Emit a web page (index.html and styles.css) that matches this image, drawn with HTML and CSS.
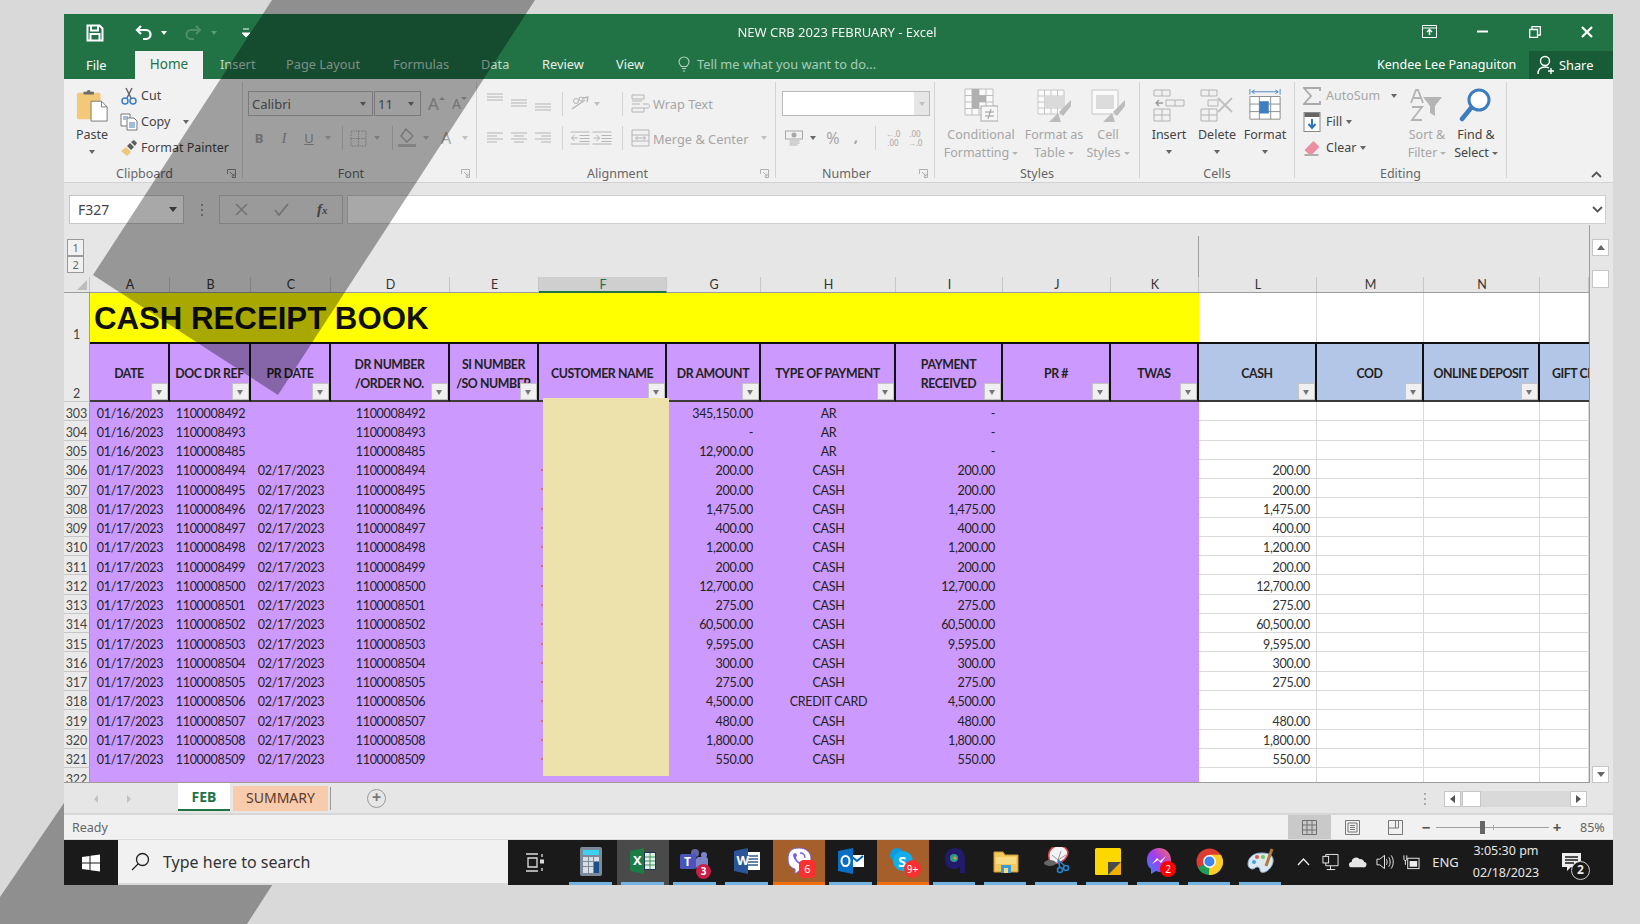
FILE: index.html
```html
<!DOCTYPE html>
<html lang="en">
<head>
<meta charset="utf-8">
<title>NEW CRB 2023 FEBRUARY - Excel</title>
<link rel="stylesheet" href="styles.css">
</head>
<body>
<svg class="band-back" width="1640" height="924" viewBox="0 0 1640 924"><polygon points="0,897 64,803 325,803 247,924 0,924"/></svg>
<div class="window">
  <header class="titlebar">
    <div class="qat">
      <svg class="q-save" width="18" height="18" viewBox="0 0 18 18"><path d="M1.500 1.500h12l3 3v12h-15z" fill="none" stroke="#fff" stroke-width="2"/><path d="M5 2v4.500h7V2M4.500 16v-6h9v6" fill="none" stroke="#fff" stroke-width="2"/></svg>
      <svg class="q-undo" width="18" height="16" viewBox="0 0 18 16"><path d="M6 1 2 5l4 4" fill="none" stroke="#fff" stroke-width="2.200"/><path d="M2 5h9c6 0 6 9 0 9H8" fill="none" stroke="#fff" stroke-width="2.200"/></svg>
      <span class="caret white q-c1"></span>
      <svg class="q-redo" width="18" height="16" viewBox="0 0 18 16"><path d="M12 1l4 4-4 4" fill="none" stroke="#4f8f6b" stroke-width="2"/><path d="M16 5H7c-6 0-6 9 0 9h3" fill="none" stroke="#4f8f6b" stroke-width="2"/></svg>
      <span class="caret dimgreen q-c2"></span>
      <svg class="q-more" width="8" height="10" viewBox="0 0 8 10"><path d="M1 1h6M0 5h8l-4 4z" stroke="#fff" fill="#fff"/></svg>
    </div>
    <div class="doc-title">NEW CRB 2023 FEBRUARY - Excel</div>
    <div class="winctl">
      <svg width="15" height="13" viewBox="0 0 15 13"><path d="M.5.5h14v12H.5zM.5 3h14" fill="none" stroke="#fff"/><path d="M7.500 10V5M5 7l2.500-2.500L10 7" fill="none" stroke="#fff" stroke-width="1.500"/></svg>
      <svg width="11" height="3" viewBox="0 0 11 3"><path d="M0 1.500h11" stroke="#fff" stroke-width="2"/></svg>
      <svg width="12" height="12" viewBox="0 0 12 12"><path d="M.7 3.500h7.800v8H.7zM3 3.500V.7h8.300V9H8.500" fill="none" stroke="#fff" stroke-width="1.300"/></svg>
      <svg width="12" height="12" viewBox="0 0 12 12"><path d="M1 1l10 10M11 1 1 11" stroke="#fff" stroke-width="2.200"/></svg>
    </div>
  </header>

  <nav class="tabs">
    <span class="tab file">File</span>
    <span class="tab home">Home</span>
    <span class="tab ins">Insert</span>
    <span class="tab pl">Page Layout</span>
    <span class="tab fm">Formulas</span>
    <span class="tab dt">Data</span>
    <span class="tab rv">Review</span>
    <span class="tab vw">View</span>
    <svg class="bulb" width="12" height="16" viewBox="0 0 12 16"><path d="M3.500 10.500C2 9 1 8 1 6a5 5 0 0 1 10 0c0 2-1 3-2.500 4.500zM4 12.500h4M4.800 15h2.400" fill="none" stroke="#b5d2c2" stroke-width="1.100"/></svg>
    <span class="tell">Tell me what you want to do...</span>
    <span class="user">Kendee Lee Panaguiton</span>
    <span class="share">
      <svg width="19" height="20" viewBox="0 0 19 20"><circle cx="8" cy="6" r="4.500" fill="none" stroke="#fff" stroke-width="1.400"/><path d="M1 19c0-5 3-7 7-7 1.500 0 3 .4 4 1M14 13v6M11 16h6" fill="none" stroke="#fff" stroke-width="1.400"/></svg>
      Share
    </span>
  </nav>

  <section class="ribbon">
    <div class="group g-clip has-launch">
      <div class="gbody">
        <div class="big paste-btn en">
          <svg width="34" height="36" viewBox="0 0 34 36"><rect x="1" y="5" width="25" height="28" rx="2" fill="#f2c879"/><path d="M8 7V4h3.500a2 2 0 0 1 4 0H19v3z" fill="#6b6b6b"/><path d="M16 14h11l6 6v15H16z" fill="#fff" stroke="#777"/><path d="M27 14v6h6" fill="none" stroke="#777"/></svg>
          <span>Paste</span><i class="caret"></i>
        </div>
        <div class="list">
          <div class="li en"><svg width="18" height="18" viewBox="0 0 18 18"><path d="M6 1l5 10M12 1 7 11" stroke="#666" stroke-width="1.500" fill="none"/><circle cx="5" cy="14" r="3" fill="none" stroke="#3c7ec6" stroke-width="1.500"/><circle cx="13" cy="14" r="3" fill="none" stroke="#3c7ec6" stroke-width="1.500"/></svg><span>Cut</span></div>
          <div class="li en"><svg width="18" height="18" viewBox="0 0 18 18"><path d="M1 1h9v12H1z" fill="#fff" stroke="#777"/><path d="M7 5h7l3 3v9H7z" fill="#fff" stroke="#777"/><path d="M9 10h6M9 12h6M9 14h6" stroke="#3c7ec6"/><path d="M3 4h5M3 6h3" stroke="#3c7ec6"/></svg><span>Copy</span><i class="caret copy-caret"></i></div>
          <div class="li en"><svg width="18" height="18" viewBox="0 0 18 18"><path d="M1 12l5-4 5 5-4 4z" fill="#eec77a"/><path d="M7 7l3-3 4 4-3 3zM11 3l3-2 3 3-2 3z" fill="#5d5d5d"/></svg><span>Format Painter</span></div>
        </div>
      </div>
      <div class="glabel">Clipboard</div>
      <svg class="launch" width="9" height="9" viewBox="0 0 9 9"><path d="M.5 5V.5H8.500V8.500H5M3 3l4 4M7 4.500V7H4.500" fill="none" stroke="#8a8a8a"/></svg>
    </div>

    <div class="group g-font has-launch">
      <div class="gbody col">
        <div class="r1 pl5">
          <div class="combo w125"><span>Calibri</span><i class="caret"></i></div>
          <div class="combo w47"><span>11</span><i class="caret"></i></div>
          <span class="fa big-a">A<i class="up"></i></span>
          <span class="fa small-a">A<i class="down"></i></span>
        </div>
        <div class="r2 pl4">
          <b class="tb w24 serif">B</b><em class="tb w26 serif">I</em><u class="tb w24 serif">U</u><i class="tb w14"><i class="caret"></i></i>
          <span class="sep w15"></span>
          <svg class="w17" width="17" height="17" viewBox="0 0 17 17"><path d="M1 1h15v15H1zM8.500 1v15M1 8.500h15" fill="none" stroke="#b7b7b7" stroke-dasharray="1.500 1"/></svg>
          <i class="tb w20"><i class="caret"></i></i>
          <span class="sep w11"></span>
          <svg class="w18" width="18" height="20" viewBox="0 0 18 20"><path d="M8 1l7 7-6 6-6-6z" fill="none" stroke="#b0b0b0" stroke-width="1.300"/><rect x="0" y="16" width="18" height="3" fill="#c6c6c6"/></svg>
          <i class="tb w20"><i class="caret"></i></i>
          <span class="tb w20 bigtxt">A</span>
          <i class="tb w18"><i class="caret"></i></i>
        </div>
      </div>
      <div class="glabel">Font</div>
      <svg class="launch" width="9" height="9" viewBox="0 0 9 9"><path d="M.5 5V.5H8.500V8.500H5M3 3l4 4M7 4.500V7H4.500" fill="none" stroke="#b0b0b0"/></svg>
    </div>

    <div class="group g-align has-launch">
      <div class="gbody col">
        <div class="r1 pl6">
          <svg class="w24 off-6" width="16" height="9" viewBox="0 0 16 9"><path d="M0 1h16M0 4h16M0 7h16" stroke="#b5b5b5"/></svg>
          <svg class="w24" width="16" height="9" viewBox="0 0 16 9"><path d="M0 1h16M0 4h16M0 7h16" stroke="#b5b5b5"/></svg>
          <svg class="w24 off4" width="16" height="9" viewBox="0 0 16 9"><path d="M0 1h16M0 4h16M0 7h16" stroke="#b5b5b5"/></svg>
          <span class="sep w14"></span>
          <svg class="w22" width="20" height="18" viewBox="0 0 20 18"><path d="M2 14l13-9M13 3l5-1-1 5" fill="none" stroke="#b3b3b3" stroke-width="1.300"/><circle cx="6" cy="6" r="2.500" fill="none" stroke="#b3b3b3"/><circle cx="11" cy="4" r="2" fill="none" stroke="#b3b3b3"/></svg>
          <i class="tb w12"><i class="caret"></i></i>
          <i class="w10"></i>
          <span class="sep w18"></span>
          <svg class="wrapico" width="19" height="19" viewBox="0 0 19 19"><path d="M1 1h12v4H1zM1 7h10M1 10h8M1 14h12v4H1z" fill="none" stroke="#b5b5b5"/><path d="M12 10h5c2 0 2 4 0 4h-4" fill="none" stroke="#b5b5b5"/></svg>
          <span class="lbl">Wrap Text</span>
        </div>
        <div class="r2 pl6">
          <svg class="w24" width="16" height="12" viewBox="0 0 16 12"><path d="M0 1h16M0 4h10M0 7h16M0 10h10" stroke="#b5b5b5"/></svg>
          <svg class="w24" width="16" height="12" viewBox="0 0 16 12"><path d="M0 1h16M3 4h10M0 7h16M3 10h10" stroke="#b5b5b5"/></svg>
          <svg class="w24" width="16" height="12" viewBox="0 0 16 12"><path d="M0 1h16M6 4h10M0 7h16M6 10h10" stroke="#b5b5b5"/></svg>
          <span class="sep w14"></span>
          <svg class="w22" width="19" height="14" viewBox="0 0 19 14"><path d="M0 1h19M9 4.500h10M9 7.500h10M9 10.500h10M0 13h19M7 7H1M4 4 1 7l3 3" fill="none" stroke="#b5b5b5"/></svg>
          <svg class="w22" width="19" height="14" viewBox="0 0 19 14"><path d="M0 1h19M9 4.500h10M9 7.500h10M9 10.500h10M0 13h19M1 7h6M4 4l3 3-3 3" fill="none" stroke="#b5b5b5"/></svg>
          <span class="sep w18"></span>
          <svg class="wrapico" width="18" height="18" viewBox="0 0 18 18"><path d="M.5 1h17v16H.5zM.5 6h17M.5 12h17M4 9h10M6 7 4 9l2 2M12 7l2 2-2 2" fill="none" stroke="#b5b5b5"/></svg>
          <span class="lbl merge">Merge &amp; Center</span>
          <i class="caret merge-caret"></i>
        </div>
      </div>
      <div class="glabel">Alignment</div>
      <svg class="launch" width="9" height="9" viewBox="0 0 9 9"><path d="M.5 5V.5H8.500V8.500H5M3 3l4 4M7 4.500V7H4.500" fill="none" stroke="#b0b0b0"/></svg>
    </div>

    <div class="group g-num has-launch">
      <div class="gbody col">
        <div class="r1 pl6"><div class="combo w148 blank"><span></span><i class="combo-btn"><i class="caret"></i></i></div></div>
        <div class="r2 pl8">
          <svg class="w20" width="19" height="19" viewBox="0 0 19 19"><rect x="1" y="2" width="17" height="8" fill="none" stroke="#a8a8a8"/><circle cx="9.500" cy="6" r="2.500" fill="#a8a8a8"/><path d="M5 12h10M5 14h10M5 16h8" stroke="#c6c6c6" stroke-width="1.500"/></svg>
          <i class="tb w18"><i class="caret dk"></i></i>
          <span class="tb w22 pct">%</span>
          <span class="tb w24 comma">,</span>
          <span class="sep w14"></span>
          <span class="tb w22 dec">←.0<br>.00</span>
          <span class="tb w22 dec">.00<br>→.0</span>
        </div>
      </div>
      <div class="glabel">Number</div>
      <svg class="launch" width="9" height="9" viewBox="0 0 9 9"><path d="M.5 5V.5H8.500V8.500H5M3 3l4 4M7 4.500V7H4.500" fill="none" stroke="#b0b0b0"/></svg>
    </div>

    <div class="group g-styles">
      <div class="gbody pl1">
        <div class="big w90">
          <svg width="34" height="34" viewBox="0 0 34 34"><path d="M1 1h28v26H1zM8 1v26M15 1v26M22 1v26M1 7.500h28M1 14h28M1 20.500h28" fill="#fafafa" stroke="#bdbdbd"/><path d="M8 1h7v6.500H8zM8 7.500h14V14H8zM8 14h7v6.500H8z" fill="#b0b0b0"/><rect x="17" y="18" width="17" height="15" fill="#f6f6f6" stroke="#a8a8a8"/><path d="M21 24h9M21 28h9M27 21l-3 10" stroke="#999"/></svg>
          <span>Conditional<br>Formatting<i class="caret inl"></i></span>
        </div>
        <div class="big w56">
          <svg width="34" height="34" viewBox="0 0 34 34"><path d="M1 2h26v24H1zM7.500 2v24M14 2v24M20.500 2v24M1 8h26M1 14h26M1 20h26" fill="#fafafa" stroke="#c6c6c6"/><path d="M7.500 8H27v12H7.500z" fill="#dadada"/><path d="M34 12 22 24l4 4 8-10zM21 25l-9 9h12z" fill="#bcbcbc"/></svg>
          <span>Format as<br>Table<i class="caret inl"></i></span>
        </div>
        <div class="big w52">
          <svg width="34" height="34" viewBox="0 0 34 34"><path d="M1 2h26v24H1z" fill="#fafafa" stroke="#c6c6c6"/><path d="M5 7h18v14H5z" fill="#dcdcdc"/><path d="M34 12 22 24l4 4 8-10zM21 25l-9 9h12z" fill="#bcbcbc"/></svg>
          <span>Cell<br>Styles<i class="caret inl"></i></span>
        </div>
      </div>
      <div class="glabel">Styles</div>
    </div>

    <div class="group g-cells">
      <div class="gbody pl4">
        <div class="big w50 en">
          <svg width="32" height="34" viewBox="0 0 32 34"><path d="M1 2h16v6H1zM13 12h18v6H13zM1 21h16v12H1zM9 2v6M9 21v12M1 27h16M22 12v6" fill="none" stroke="#b3b3b3"/><path d="M10 15H3M6 12l-3 3 3 3" fill="none" stroke="#9a9a9a" stroke-width="1.400"/></svg>
          <span>Insert</span><i class="caret"></i>
        </div>
        <div class="big w46 en">
          <svg width="34" height="34" viewBox="0 0 34 34"><path d="M1 2h16v6H1zM8 12h10v6H8zM1 21h16v12H1zM9 2v6M9 21v12M1 27h16" fill="none" stroke="#b3b3b3"/><path d="M18 10l14 14M32 10 18 24" stroke="#c0c0c0" stroke-width="1.800"/></svg>
          <span>Delete</span><i class="caret"></i>
        </div>
        <div class="big w50 en">
          <svg width="34" height="36" viewBox="0 0 34 36"><path d="M1 1v6M33 1v6M3 4h28M3 4l3-2M3 4l3 2M31 4l-3-2M31 4l-3 2" fill="none" stroke="#4a86c5"/><path d="M1 9h32v24H1zM11 9v24M23 9v24M1 17h32M1 25h32" fill="#fff" stroke="#8a8a8a"/><rect x="11" y="14" width="10" height="13" fill="#3f7fc1"/></svg>
          <span>Format</span><i class="caret"></i>
        </div>
      </div>
      <div class="glabel">Cells</div>
    </div>

    <div class="group g-edit">
      <div class="gbody">
        <div class="list edit-list">
          <div class="li dis"><svg width="18" height="18" viewBox="0 0 18 18"><path d="M17 4V1H1l7 8-7 8h16v-3" fill="none" stroke="#aaa" stroke-width="1.800"/></svg><span>AutoSum</span><i class="caret sum-caret"></i></div>
          <div class="li en"><svg width="17" height="20" viewBox="0 0 17 20"><rect x=".5" y=".5" width="16" height="19" fill="#fff" stroke="#8a8a8a"/><rect x="1" y="1" width="15" height="4" fill="#666"/><path d="M8.500 7v9M5 12l3.500 4 3.500-4" fill="none" stroke="#2d74b8" stroke-width="2"/></svg><span>Fill</span><i class="caret"></i></div>
          <div class="li en"><svg width="17" height="18" viewBox="0 0 17 18"><path d="M1 11l9-9 6 6-7 7H5z" fill="#ea8f9f"/><path d="M1 16h14" stroke="#999" stroke-width="1.500"/></svg><span>Clear</span><i class="caret"></i></div>
        </div>
        <div class="big w48 dis">
          <svg class="sorticon" width="34" height="34" viewBox="0 0 34 34"><path d="M1 15 6 2h2l5 13M3 10h8M2 19h10L2 32h10" fill="none" stroke="#b3b3b3" stroke-width="1.800"/><path d="M13 9h19l-7 9v10l-5-3v-7z" fill="#b5b5b5"/></svg>
          <span>Sort &amp;<br>Filter<i class="caret inl"></i></span>
        </div>
        <div class="big w50 en">
          <svg width="34" height="34" viewBox="0 0 34 34"><circle cx="20" cy="12" r="10" fill="#fff" stroke="#3b7dbe" stroke-width="3"/><path d="M12 20 3 31" stroke="#3b7dbe" stroke-width="4.500" stroke-linecap="round"/></svg>
          <span>Find &amp;<br>Select<i class="caret inl"></i></span>
        </div>
      </div>
      <div class="glabel">Editing</div>
    </div>
    <svg class="collapse" width="11" height="7" viewBox="0 0 11 7"><path d="M1 6l4.500-4.500L10 6" fill="none" stroke="#555" stroke-width="1.800"/></svg>
  </section>

  <section class="formula">
    <div class="namebox"><span>F327</span><i class="caret dk"></i></div>
    <div class="fdots"></div>
    <div class="fxbox">
      <svg width="13" height="13" viewBox="0 0 13 13"><path d="M1 1l11 11M12 1 1 12" stroke="#b0b0b0" stroke-width="1.700"/></svg>
      <svg width="15" height="13" viewBox="0 0 15 13"><path d="M1 7l4 5L14 1" fill="none" stroke="#b0b0b0" stroke-width="1.900"/></svg>
      <em class="fx">f<small>x</small></em>
    </div>
    <div class="finput"><svg width="11" height="7" viewBox="0 0 11 7"><path d="M1 1l4.500 4.500L10 1" fill="none" stroke="#555" stroke-width="1.800"/></svg></div>
  </section>

  <section class="sheet">
    <div class="gridwrap">
      <div class="outline">
        <div class="olbtns"><span>1</span><span>2</span></div>
        <div class="freeze"></div>
      </div>
      <div class="g colhead">
        <div class="corner"><i></i></div><div>A</div><div>B</div><div>C</div><div>D</div><div>E</div><div class="sel">F</div><div>G</div><div>H</div><div>I</div><div>J</div><div>K</div><div>L</div><div>M</div><div>N</div><div></div>
      </div>
      <div class="g row1">
        <div class="rh bot">1</div>
        <div class="banner">CASH RECEIPT BOOK</div>
        <div class="w"></div><div class="w"></div><div class="w"></div><div class="w"></div>
      </div>
      <div class="g row2">
        <div class="rh bot">2</div>
        <div class="hc">DATE<i class="flt"></i></div>
        <div class="hc">DOC DR REF<i class="flt"></i></div>
        <div class="hc">PR DATE<i class="flt"></i></div>
        <div class="hc">DR NUMBER<br>/ORDER NO.<i class="flt"></i></div>
        <div class="hc">SI NUMBER<br>/SO NUMBER<i class="flt"></i></div>
        <div class="hc">CUSTOMER NAME<i class="flt"></i></div>
        <div class="hc">DR AMOUNT<i class="flt"></i></div>
        <div class="hc">TYPE OF PAYMENT<i class="flt"></i></div>
        <div class="hc">PAYMENT<br>RECEIVED<i class="flt"></i></div>
        <div class="hc">PR #<i class="flt"></i></div>
        <div class="hc">TWAS<i class="flt"></i></div>
        <div class="hc blue">CASH<i class="flt"></i></div>
        <div class="hc blue">COD<i class="flt"></i></div>
        <div class="hc blue">ONLINE DEPOSIT<i class="flt"></i></div>
        <div class="hc blue clip">GIFT CERTIFICATE</div>
      </div>
      <div class="rows">
        <div class="g"><div class="rh">303</div><div>01/16/2023</div><div>1100008492</div><div></div><div>1100008492</div><div class="s2"></div><div class="r">345,150.00</div><div>AR</div><div class="r">-</div><div class="s2"></div><div class="w r"></div><div class="w"></div><div class="w"></div><div class="w"></div></div>
        <div class="g"><div class="rh">304</div><div>01/16/2023</div><div>1100008493</div><div></div><div>1100008493</div><div class="s2"></div><div class="r">-</div><div>AR</div><div class="r">-</div><div class="s2"></div><div class="w r"></div><div class="w"></div><div class="w"></div><div class="w"></div></div>
        <div class="g"><div class="rh">305</div><div>01/16/2023</div><div>1100008485</div><div></div><div>1100008485</div><div class="s2"></div><div class="r">12,900.00</div><div>AR</div><div class="r">-</div><div class="s2"></div><div class="w r"></div><div class="w"></div><div class="w"></div><div class="w"></div></div>
        <div class="g"><div class="rh">306</div><div>01/17/2023</div><div>1100008494</div><div>02/17/2023</div><div>1100008494</div><div class="s2"></div><div class="r">200.00</div><div>CASH</div><div class="r">200.00</div><div class="s2"></div><div class="w r">200.00</div><div class="w"></div><div class="w"></div><div class="w"></div></div>
        <div class="g"><div class="rh">307</div><div>01/17/2023</div><div>1100008495</div><div>02/17/2023</div><div>1100008495</div><div class="s2"></div><div class="r">200.00</div><div>CASH</div><div class="r">200.00</div><div class="s2"></div><div class="w r">200.00</div><div class="w"></div><div class="w"></div><div class="w"></div></div>
        <div class="g"><div class="rh">308</div><div>01/17/2023</div><div>1100008496</div><div>02/17/2023</div><div>1100008496</div><div class="s2"></div><div class="r">1,475.00</div><div>CASH</div><div class="r">1,475.00</div><div class="s2"></div><div class="w r">1,475.00</div><div class="w"></div><div class="w"></div><div class="w"></div></div>
        <div class="g"><div class="rh">309</div><div>01/17/2023</div><div>1100008497</div><div>02/17/2023</div><div>1100008497</div><div class="s2"></div><div class="r">400.00</div><div>CASH</div><div class="r">400.00</div><div class="s2"></div><div class="w r">400.00</div><div class="w"></div><div class="w"></div><div class="w"></div></div>
        <div class="g"><div class="rh">310</div><div>01/17/2023</div><div>1100008498</div><div>02/17/2023</div><div>1100008498</div><div class="s2"></div><div class="r">1,200.00</div><div>CASH</div><div class="r">1,200.00</div><div class="s2"></div><div class="w r">1,200.00</div><div class="w"></div><div class="w"></div><div class="w"></div></div>
        <div class="g"><div class="rh">311</div><div>01/17/2023</div><div>1100008499</div><div>02/17/2023</div><div>1100008499</div><div class="s2"></div><div class="r">200.00</div><div>CASH</div><div class="r">200.00</div><div class="s2"></div><div class="w r">200.00</div><div class="w"></div><div class="w"></div><div class="w"></div></div>
        <div class="g"><div class="rh">312</div><div>01/17/2023</div><div>1100008500</div><div>02/17/2023</div><div>1100008500</div><div class="s2"></div><div class="r">12,700.00</div><div>CASH</div><div class="r">12,700.00</div><div class="s2"></div><div class="w r">12,700.00</div><div class="w"></div><div class="w"></div><div class="w"></div></div>
        <div class="g"><div class="rh">313</div><div>01/17/2023</div><div>1100008501</div><div>02/17/2023</div><div>1100008501</div><div class="s2"></div><div class="r">275.00</div><div>CASH</div><div class="r">275.00</div><div class="s2"></div><div class="w r">275.00</div><div class="w"></div><div class="w"></div><div class="w"></div></div>
        <div class="g"><div class="rh">314</div><div>01/17/2023</div><div>1100008502</div><div>02/17/2023</div><div>1100008502</div><div class="s2"></div><div class="r">60,500.00</div><div>CASH</div><div class="r">60,500.00</div><div class="s2"></div><div class="w r">60,500.00</div><div class="w"></div><div class="w"></div><div class="w"></div></div>
        <div class="g"><div class="rh">315</div><div>01/17/2023</div><div>1100008503</div><div>02/17/2023</div><div>1100008503</div><div class="s2"></div><div class="r">9,595.00</div><div>CASH</div><div class="r">9,595.00</div><div class="s2"></div><div class="w r">9,595.00</div><div class="w"></div><div class="w"></div><div class="w"></div></div>
        <div class="g"><div class="rh">316</div><div>01/17/2023</div><div>1100008504</div><div>02/17/2023</div><div>1100008504</div><div class="s2"></div><div class="r">300.00</div><div>CASH</div><div class="r">300.00</div><div class="s2"></div><div class="w r">300.00</div><div class="w"></div><div class="w"></div><div class="w"></div></div>
        <div class="g"><div class="rh">317</div><div>01/17/2023</div><div>1100008505</div><div>02/17/2023</div><div>1100008505</div><div class="s2"></div><div class="r">275.00</div><div>CASH</div><div class="r">275.00</div><div class="s2"></div><div class="w r">275.00</div><div class="w"></div><div class="w"></div><div class="w"></div></div>
        <div class="g"><div class="rh">318</div><div>01/17/2023</div><div>1100008506</div><div>02/17/2023</div><div>1100008506</div><div class="s2"></div><div class="r">4,500.00</div><div>CREDIT CARD</div><div class="r">4,500.00</div><div class="s2"></div><div class="w r"></div><div class="w"></div><div class="w"></div><div class="w"></div></div>
        <div class="g"><div class="rh">319</div><div>01/17/2023</div><div>1100008507</div><div>02/17/2023</div><div>1100008507</div><div class="s2"></div><div class="r">480.00</div><div>CASH</div><div class="r">480.00</div><div class="s2"></div><div class="w r">480.00</div><div class="w"></div><div class="w"></div><div class="w"></div></div>
        <div class="g"><div class="rh">320</div><div>01/17/2023</div><div>1100008508</div><div>02/17/2023</div><div>1100008508</div><div class="s2"></div><div class="r">1,800.00</div><div>CASH</div><div class="r">1,800.00</div><div class="s2"></div><div class="w r">1,800.00</div><div class="w"></div><div class="w"></div><div class="w"></div></div>
        <div class="g"><div class="rh">321</div><div>01/17/2023</div><div>1100008509</div><div>02/17/2023</div><div>1100008509</div><div class="s2"></div><div class="r">550.00</div><div>CASH</div><div class="r">550.00</div><div class="s2"></div><div class="w r">550.00</div><div class="w"></div><div class="w"></div><div class="w"></div></div>
        <div class="g"><div class="rh">322</div><div></div><div></div><div></div><div></div><div class="s2"></div><div></div><div></div><div></div><div class="s2"></div><div class="w r"></div><div class="w"></div><div class="w"></div><div class="w"></div></div>
      </div>
      <div class="ticks"></div>
      <div class="cream"></div>
    </div>
    <aside class="vscroll">
      <span class="sbtn"><i class="tri up"></i></span>
      <span class="vthumb"></span>
      <span class="vtrack"></span>
      <span class="sbtn"><i class="tri down"></i></span>
    </aside>
  </section>

  <section class="sheetbar">
    <i class="nav-l"></i><i class="nav-r"></i>
    <span class="st feb">FEB</span>
    <span class="st summ">SUMMARY</span>
    <i class="stsep"></i>
    <span class="addsheet">+</span>
    <span class="hdots"></span>
    <div class="hscroll"><span class="sbtn h"><i class="tri left"></i></span><span class="hthumb"></span><span class="htrack"></span><span class="sbtn h"><i class="tri right"></i></span></div>
  </section>

  <section class="status">
    <span class="ready">Ready</span>
    <span class="viewbtn on"><svg width="15" height="15" viewBox="0 0 15 15"><path d="M.5.5h14v14H.5zM5 .5v14M10 .5v14M.5 5h14M.5 10h14" fill="none" stroke="#6f6f6f"/></svg></span>
    <span class="viewbtn"><svg width="15" height="15" viewBox="0 0 15 15"><path d="M.5.5h14v14H.5zM3 3h9v9H3zM5 5.500h5M5 7.500h5M5 9.500h5" fill="none" stroke="#777"/></svg></span>
    <span class="viewbtn"><svg width="15" height="15" viewBox="0 0 15 15"><path d="M.5.5h14v14H.5zM7.500.5V8M.5 8h10V.5" fill="none" stroke="#777"/></svg></span>
    <span class="zm">−</span>
    <div class="slider"><i class="thumb"></i><i class="tick"></i></div>
    <span class="zm">+</span>
    <span class="pctz">85%</span>
  </section>

  <footer class="taskbar">
    <div class="start"><svg width="18" height="18" viewBox="0 0 18 18"><path d="M0 3l7.500-1v6.500H0zM8.500 1.800 18 .5v8H8.500zM0 9.500h7.500V16L0 15zM8.500 9.500H18v8l-9.500-1.300z" fill="#fff"/></svg></div>
    <div class="search"><svg width="19" height="19" viewBox="0 0 19 19"><circle cx="11.500" cy="7.500" r="6" fill="none" stroke="#222" stroke-width="1.300"/><path d="M7 12 1 18" stroke="#222" stroke-width="1.300"/></svg><span>Type here to search</span></div>
    <div class="tv"><svg width="20" height="19" viewBox="0 0 20 19"><path d="M1 1h12M1 18h12M3 5h9v9H3z" fill="none" stroke="#ddd" stroke-width="1.300"/><path d="M17 1v3M17 15v3" stroke="#ddd" stroke-width="1.300"/><rect x="15" y="6.500" width="4" height="4" fill="#ddd"/></svg></div>
    <div class="ti run"><svg width="22" height="29" viewBox="0 0 22 29"><rect width="22" height="29" rx="2" fill="#7b8b99"/><rect x="3" y="3" width="16" height="5" fill="#3ed0f0"/><path d="M3 10h5v4H3zM9 10h4v4H9zM3 15h5v4H3zM9 15h4v4H9zM3 20h5v6H3zM9 20h4v6H9z" fill="#d7dde2"/><path d="M14 10h5v4h-5z" fill="#d7dde2"/><path d="M14 15h5v11h-5z" fill="#1d4f8b"/></svg></div>
    <div class="ti run excel"><svg width="26" height="26" viewBox="0 0 26 26"><path d="M14 4h12v18H14z" fill="#235"/><path d="M15 5h10v16H15z" fill="#dff0e5"/><path d="M15 9h10M15 13h10M15 17h10M20 5v16" stroke="#3f8f62"/><path d="M0 3l14-3v26L0 23z" fill="#1d7b45"/><text x="3" y="17" class="xl">X</text></svg></div>
    <div class="ti run"><svg width="30" height="26" viewBox="0 0 30 26"><circle cx="15" cy="5" r="4" fill="#6264a7"/><circle cx="24" cy="7" r="3" fill="#7b83c9"/><rect x="16" y="9" width="12" height="12" rx="3" fill="#7b83c9"/><rect y="6" width="16" height="15" rx="1.500" fill="#4b53bc"/><text x="4" y="18" class="tm">T</text></svg><b class="badge crim">3</b></div>
    <div class="ti run"><svg width="26" height="26" viewBox="0 0 26 26"><path d="M12 4h14v18H12z" fill="#fff"/><path d="M14 8h10M14 11h10M14 14h10M14 17h10" stroke="#345a94" stroke-width="1.300"/><path d="M0 3l14-3v26L0 23z" fill="#2a5699"/><text x="2.500" y="17" class="xl">W</text></svg></div>
    <div class="ti run alert"><svg width="26" height="28" viewBox="0 0 26 28"><path d="M13 1C6 1 2 4 2 12c0 6 3 9 7 10v5l5-4c7 0 11-4 11-11S20 1 13 1z" fill="#fff" stroke="#7d60c8"/><path d="M9 6c-3 1-2 4 0 7s5 5 7 4 1-3-1-3l-1 1c-2 0-4-3-4-5l1-1c0-2-1-3-2-3z" fill="#7360f2"/><path d="M14 6c3 0 5 2 5 5" fill="none" stroke="#7360f2" stroke-width="1.300"/></svg><b class="badge red sq">6</b></div>
    <div class="ti run"><svg width="26" height="26" viewBox="0 0 26 26"><path d="M12 7h14v12H12z" fill="#fff"/><path d="M13 8l6 5 6-5" fill="none" stroke="#0364b8" stroke-width="2"/><path d="M0 3l15-3v26L0 23z" fill="#0a6fc4"/><ellipse cx="7.500" cy="13" rx="4" ry="5" fill="none" stroke="#fff" stroke-width="2"/></svg></div>
    <div class="ti run alert"><svg width="26" height="26" viewBox="0 0 26 26"><circle cx="7" cy="7" r="7" fill="#0a9cdc"/><circle cx="19" cy="19" r="7" fill="#0a9cdc"/><circle cx="13" cy="13" r="10" fill="#12aee8"/><text x="8" y="19" class="sk">S</text></svg><b class="badge red">9+</b></div>
    <div class="ti2 run"><svg width="22" height="28" viewBox="0 0 22 28"><path d="M11 1C4 1 1 6 1 12s3 10 9 10c3 0 5-1 6-3v7h5V12C21 6 18 1 11 1z" fill="#221a6b"/><circle cx="10" cy="11" r="4" fill="#2f9a8a"/><circle cx="11" cy="11" r="1.500" fill="#d8a32c"/></svg></div>
    <div class="ti2 run"><svg width="26" height="24" viewBox="0 0 26 24"><path d="M1 3h9l2 3h13v17H1z" fill="#f4c95a" stroke="#c89a36"/><path d="M3 8h20v7H3z" fill="#f9dd84"/><path d="M8 16h10v8H8z" fill="#3b9ad8"/><path d="M11 19h4v5h-4z" fill="#f9dd84"/></svg></div>
    <div class="ti2 run"><svg width="27" height="28" viewBox="0 0 27 28"><path d="M6 11A10 10 0 0 1 24 3c2 3 0 9-6 12S6 15 6 11z" fill="#f4f4f4" stroke="#d8424f" stroke-width="1.600"/><path d="M15 13l3-9M15 13 9 8M15 13l8-5" stroke="#999"/><ellipse cx="7" cy="16" rx="6" ry="3" fill="#666"/><path d="M15 13l2 8M15 13l7 6" stroke="#2b80c9" stroke-width="1.600"/><circle cx="17" cy="23" r="2.500" fill="none" stroke="#2b80c9" stroke-width="1.600"/><circle cx="23" cy="21" r="2.500" fill="none" stroke="#2b80c9" stroke-width="1.600"/></svg></div>
    <div class="ti2 run"><svg width="26" height="27" viewBox="0 0 26 27"><rect width="26" height="27" rx="1.500" fill="#fdd800"/><path d="M13 27l13-13v11a2 2 0 0 1-2 2z" fill="#f0b000"/><path d="M13 27V14h13z" fill="#4a4a4a"/></svg></div>
    <div class="ti2 run"><svg width="26" height="28" viewBox="0 0 26 28"><defs><linearGradient id="ms" x1="0" y1="1" x2="1" y2="0"><stop offset="0" stop-color="#2f8bf5"/><stop offset=".5" stop-color="#a13cf0"/><stop offset="1" stop-color="#ff6a68"/></linearGradient></defs><path d="M13 1C6 1 1 6 1 13c0 4 1 7 4 9v5l5-3c1 0 2 1 3 1 7 0 12-5 12-12S20 1 13 1z" fill="url(#ms)"/><path d="M6 17l5-6 3 3 6-5-5 7-3-3z" fill="#fff"/></svg><b class="badge pure">2</b></div>
    <div class="ti2 run"><svg width="27" height="27" viewBox="0 0 27 27"><circle cx="13.500" cy="13.500" r="13" fill="#dc3d32"/><path d="M13.500 13.500 2 19.500A13 13 0 0 0 13 27z" fill="#1f9d55"/><path d="M13.500 13.500 13 27A13 13 0 0 0 24.800 6.800H13.500z" fill="#fccd24"/><circle cx="13.500" cy="13.500" r="6.500" fill="#fff"/><circle cx="13.500" cy="13.500" r="5" fill="#3f85ed"/></svg></div>
    <div class="ti2 run"><svg width="28" height="28" viewBox="0 0 28 28"><path d="M14 6C6 6 1 11 1 17c0 5 5 6 7 4s5-1 5 2 4 3 7 1 7-7 6-12-6-6-12-6z" fill="#dbe7f1" stroke="#8eb1cb"/><circle cx="7" cy="15" r="2" fill="#46a2e0"/><circle cx="10" cy="10" r="2" fill="#e35b4e"/><circle cx="16" cy="10" r="2" fill="#7bc354"/><path d="M19 19 25 2" stroke="#b27a36" stroke-width="3"/></svg></div>
    <div class="tray">
      <svg width="13" height="8" viewBox="0 0 13 8"><path d="M1 7l5.500-6L12 7" fill="none" stroke="#eee" stroke-width="1.300"/></svg>
      <svg width="18" height="18" viewBox="0 0 18 18"><path d="M4 1h13v12H4zM9 13v4M5 17h9" fill="none" stroke="#eee"/><rect x="1" y="3" width="6" height="7" fill="#1a1a1a" stroke="#eee"/></svg>
      <svg width="19" height="13" viewBox="0 0 19 13"><path d="M3 13a3 3 0 0 1 0-6 5 5 0 0 1 9-3 4 4 0 0 1 5 3 3 3 0 0 1-1 6z" fill="#e6e6e6"/></svg>
      <svg width="18" height="18" viewBox="0 0 18 18"><path d="M1 6h3l5-4v14l-5-4H1z" fill="none" stroke="#eee"/><path d="M11 6c1 2 1 4 0 6M13.500 4c2 3 2 7 0 10M16 2c3 4 3 10 0 14" fill="none" stroke="#eee"/></svg>
      <svg width="18" height="16" viewBox="0 0 18 16"><rect x="5" y="4" width="12" height="11" fill="none" stroke="#eee"/><rect x="7" y="7" width="8" height="6" fill="#eee"/><path d="M1 1v4c0 2 3 2 3 0V1M2.500 6v5" fill="none" stroke="#eee"/></svg>
      <span class="eng">ENG</span>
      <span class="clock">3:05:30 pm<br>02/18/2023</span>
      <span class="notif"><svg width="19" height="18" viewBox="0 0 19 18"><path d="M0 0h19v14H9l-4 4v-4H0z" fill="#eee"/><path d="M3 4h13M3 7h13M3 10h9" stroke="#1a1a1a" stroke-width="1.300"/></svg><b class="nbadge">2</b></span>
    </div>
  </footer>
</div>
<svg class="band-top" width="1640" height="924" viewBox="0 0 1640 924"><polygon points="272,0 535,0 278,395 93,275"/></svg>
</body>
</html>
```
FILE: styles.css
```css
*{box-sizing:border-box}
html,body{margin:0;padding:0}
body{width:1640px;height:924px;overflow:hidden;background:#d9d9d9;position:relative;font-family:"Noto Sans",sans-serif;padding:14px 0 0 64px}
svg{display:block;flex:none}
i,em,u,b{font-style:normal}
.band-back{position:absolute;left:0;top:0;z-index:0}
.band-back polygon{fill:#8f8f8f}
.band-top{position:absolute;left:0;top:0;z-index:2;pointer-events:none}
.band-top polygon{fill:#000;fill-opacity:.34}
.window{position:relative;z-index:1;width:1549px;height:871px;display:flex;flex-direction:column;filter:blur(.4px)}

/* title bar */
.titlebar{height:37px;background:#217346;display:flex;align-items:center;color:#fff;position:relative}
.qat{display:flex;align-items:center;width:400px}
.q-save{margin-left:22px}
.q-undo{margin-left:31px}
.q-c1{margin-left:8px}
.q-redo{margin-left:17px}
.q-c2{margin-left:9px}
.q-more{margin-left:25px}
.doc-title{position:absolute;left:0;right:0;text-align:center;font-size:13px;color:#f2f2f2;padding-right:3px;top:9px}
.winctl{margin-left:auto;display:flex;align-items:center;width:191.500px;justify-content:space-between;padding-right:20px;margin-top:-2px;position:relative}
.caret{display:inline-block;width:0;height:0;border-left:3.500px solid transparent;border-right:3.500px solid transparent;border-top:4px solid #777}
.caret.white{border-top-color:#fff}
.caret.dimgreen{border-top-color:#5a9a76}
.caret.dk{border-top-color:#555}

/* tabs */
.tabs{height:28px;background:#217346;display:flex;align-items:center;position:relative;font-size:12.800px;color:#bfd8ca}
.tab{position:absolute;top:0;height:28px;line-height:27px;white-space:nowrap}
.file{left:22px;color:#fff;line-height:28px}
.home{left:71px;width:68px;background:#f1f1f1;color:#217346;text-align:center;font-size:13.500px}
.ins{left:156px}.pl{left:222px}.fm{left:329px}.dt{left:417px}.rv{left:478px;color:#e7f0eb}.vw{left:552px;color:#e7f0eb}
.bulb{position:absolute;left:614px;top:5px}
.tell{position:absolute;left:633px;top:0;line-height:27px;white-space:nowrap;color:#a9cbb8}
.user{position:absolute;left:1313px;top:0;line-height:27px;color:#fff;white-space:nowrap;font-size:12.500px}
.share{position:absolute;left:1465px;right:0;top:0;height:28px;background:#185c37;color:#fff;display:flex;align-items:center;gap:3px;padding-left:8px;padding-bottom:1px}

/* ribbon */
.ribbon{height:104px;background:#f1f1f1;border-bottom:1px solid #d2d2d2;display:flex;padding-top:3px;color:#a6a6a6;font-size:12.500px;line-height:18px}
.group{height:96px;border-right:1px solid #d4d4d4;position:relative;flex:none}
.g-clip{width:179px}.g-font{width:234px}.g-align{width:299px}.g-num{width:159px}.g-styles{width:205px}.g-cells{width:155px}.g-edit{width:212px}
.gbody{height:84px;display:flex}
.gbody.col{flex-direction:column}
.glabel{text-align:center;color:#666;font-size:12.500px;line-height:16px;height:12px;white-space:nowrap}
.has-launch .glabel{padding-right:17px}
.launch{position:absolute;right:6px;bottom:0}
.big{display:flex;flex-direction:column;align-items:center;text-align:center;padding-top:6px;white-space:nowrap;flex:none}
.big svg{margin-bottom:4px;height:34px}
.big span{line-height:18px}
.big>.caret{margin-top:6px}
.caret.inl{margin-left:3px;vertical-align:2px;border-left-width:3px;border-right-width:3px;border-top-width:3px;border-top-color:#b5b5b5}
.en{color:#444}
.en .caret{border-top-color:#666}
.en .caret.inl{border-top-color:#666}
.dis{color:#a6a6a6}
.paste-btn{width:56px}
.list{display:flex;flex-direction:column;padding-top:1px}
.li{height:26px;display:flex;align-items:center;white-space:nowrap}
.li svg{width:18px;margin-right:3px}
.copy-caret{margin-left:13px}
.edit-list{width:108px;padding-left:8px}
.edit-list .li svg{margin-right:5px}
.edit-list .li .caret{margin-left:4px}
.edit-list .li.dis .caret.sum-caret{margin-left:11px;border-top-color:#666}
.w10{width:10px;flex:none}.w11{width:11px}.w12{width:12px}.w14{width:14px}.w15{width:15px}.w17{width:17px}.w18{width:18px}.w20{width:20px}.w22{width:22px}.w24{width:24px}.w26{width:26px}
.w46{width:46px}.w47{width:47px}.w48{width:48px}.w50{width:50px}.w52{width:52px}.w56{width:56px}.w90{width:90px}.w125{width:125px}.w148{width:148px}
.r1,.r2{display:flex;align-items:center;flex:none}
.r1{height:34px;padding-top:9px}
.r2{height:24px;margin-top:10px}
.pl1{padding-left:1px}.pl4{padding-left:4px}.pl5{padding-left:5px}.pl6{padding-left:6px}.pl8{padding-left:8px}
svg.w24{width:24px;padding:0 4px}
svg.w22{width:22px;padding:0 1px}
svg.w20{width:20px}
svg.off-6{position:relative;top:-6px}
svg.off4{position:relative;top:4px}
.combo{height:25px;border:1px solid #b9b9b9;background:transparent;display:flex;align-items:center;justify-content:space-between;padding:0 6px 0 3px;color:#666;font-size:13px;flex:none}
.combo+.combo{margin-left:1px}
.combo.blank{background:#fff;padding:0}
.combo-btn{width:15px;height:23px;background:#e6e6e6;display:flex;align-items:center;justify-content:center}
.combo-btn .caret{border-top-color:#c0c0c0}
.fa{color:#b0b0b0;position:relative;flex:none}
.big-a{font-size:17px;margin-left:7px}
.small-a{font-size:14px;margin-left:13px}
.fa i{position:absolute;right:-6px;top:2px;width:0;height:0;border-left:3px solid transparent;border-right:3px solid transparent}
.fa i.up{border-bottom:3px solid #b0b0b0}
.fa i.down{border-top:3px solid #b0b0b0}
.tb{display:flex;align-items:center;justify-content:center;flex:none;height:24px;color:#a6a6a6}
.tb .caret{border-top-color:#c0c0c0}
.tb .caret.dk{border-top-color:#666}
.serif{font-family:"Liberation Serif",serif;font-size:15px}
b.serif{font-family:"Noto Sans",sans-serif;font-weight:700;font-size:13px}
em.serif{font-style:italic}
u.serif{font-family:"Noto Sans",sans-serif;text-decoration:underline;font-size:13px}
.bigtxt{font-size:16px}
.sep{height:24px;flex:none;display:flex;justify-content:center}
.sep::before{content:"";width:1px;height:24px;background:#d4d4d4}
.wrapico{margin-right:3px;width:19px}
.lbl{white-space:nowrap;color:#a6a6a6;font-size:12.800px}
.lbl.merge{margin-top:1px}
.merge-caret{margin-left:13px;border-top-color:#c0c0c0}
.pct{font-size:16px}
.comma{font-weight:700;font-size:15px;margin-top:-5px}
.dec{font-size:8px;line-height:9px;text-align:center;white-space:nowrap}
.collapse{align-self:flex-end;margin:0 0 4px 84px}

/* formula */
.formula{height:42px;background:#e6e6e6;display:flex;padding:12px 7px 1px 5px}
.namebox{width:115px;height:29px;background:#fff;border:1px solid #c6c6c6;display:flex;align-items:center;justify-content:space-between;padding:0 6px 0 8px;font-size:14px;color:#444;flex:none}
.namebox .caret{border-left-width:4px;border-right-width:4px;border-top-width:5px}
.fdots{width:35px;position:relative;flex:none}
.fdots::before{content:"";position:absolute;left:17px;top:9px;width:2px;height:2px;background:#999;box-shadow:0 5px #999,0 10px #999}
.fxbox{width:124px;height:29px;background:#eaeaea;border:1px solid #c6c6c6;display:flex;align-items:center;flex:none;padding-left:15px;gap:26px}
.fx{font-family:"Liberation Serif",serif;font-style:italic;font-weight:700;font-size:15px;color:#666;margin-left:2px}
.fx small{font-size:11px}
.finput{flex:1;margin-left:4px;height:29px;background:#fff;border:1px solid #cfcfcf;display:flex;align-items:center;justify-content:flex-end;padding-right:2px}

/* sheet */
.sheet{height:558px;background:#e6e6e6;display:flex}
.gridwrap{width:1526px;position:relative;overflow:hidden;font-family:Lato,sans-serif;font-size:12.500px;letter-spacing:-.3px;color:#222;display:flex;flex-direction:column;border-right:1px solid #9c9c9c;border-bottom:1px solid #9c9c9c}
.outline{height:52px;display:flex;flex:none;padding-left:3px}
.olbtns{margin-top:14px;width:17px;display:flex;flex-direction:column}
.olbtns span{height:17px;border:1px solid #9a9a9a;background:#f1f1f1;text-align:center;font:11px/15px "Noto Sans",sans-serif;color:#666}
.freeze{margin:11px 0 0 1114px;width:1px;height:41px;background:#9e9e9e}
.g{display:grid;grid-template-columns:26px 80px 81px 80px 119px 89px 128px 94px 135px 107px 108px 88px 118px 107px 116px 49px;flex:none}
.colhead{height:16px;line-height:15px;text-align:center;color:#333;font-size:12.500px;background:#e6e6e6;border-bottom:1px solid #9c9c9c;letter-spacing:0}
.colhead>div{border-right:1px solid #c6c6c6;height:15px;padding-left:1px}
.colhead .sel{background:#cfcfcf;border-bottom:2px solid #217346;color:#217346;height:16px;line-height:15px}
.corner{position:relative}
.corner i{position:absolute;right:2px;bottom:2px;width:0;height:0;border-left:10px solid transparent;border-bottom:10px solid #bcbcbc}
.rh{background:#eaeaea;border-bottom:1px solid #c6c6c6;border-right:1px solid #9c9c9c;text-align:center;color:#444;font-size:12.500px;letter-spacing:0;overflow:hidden}
.rh.bot{display:flex;align-items:flex-end;justify-content:center;padding-bottom:2px}
.row2 .rh.bot{padding-bottom:0}
.row1{height:49px}
.banner{grid-column:span 11;background:#ff0;font:700 31.200px/52px "Liberation Sans",sans-serif;letter-spacing:0;color:#111;padding-left:4px}
.w{background:#fff;border-right:1px solid #d9d9d9;border-bottom:1px solid #d9d9d9}
.row2{height:60px}
.row2 .hc{background:#cc99ff;border-top:2px solid #111;border-bottom:2px solid #3a3a3a;border-right:2px solid #111;display:flex;align-items:center;justify-content:center;text-align:center;position:relative;font-weight:700;font-size:12.300px;letter-spacing:-.4px;line-height:19px;color:#222;white-space:nowrap;overflow:hidden;padding-top:3px}
.row2 .hc.blue{background:#b4c6e7}
.row2 .hc.clip{justify-content:flex-start;padding-left:12px;border-right:0}
.flt{position:absolute;right:0;bottom:0;width:17px;height:17px;background:#f0f0f0;border:1px solid #c4c4c4}
.flt::after{content:"";position:absolute;left:4px;top:6px;border-left:3.500px solid transparent;border-right:3.500px solid transparent;border-top:5px solid #757575}
.rows{flex:1;min-height:0;overflow:hidden}
.rows .g{height:19.280px;grid-auto-rows:19.280px;line-height:18.500px;background:#cc99ff;text-align:center;white-space:nowrap}
.rows .g>div{padding-top:2.500px}
.rows .g .r{text-align:right;padding-right:8px}
.rows .g .w.r{padding-right:6px;color:#333}
.s2{grid-column:span 2}
.cream{position:absolute;left:479px;top:173px;width:126px;height:378px;background:#eee2ac}
.ticks{position:absolute;left:477px;top:236px;width:2px;height:300px;background:repeating-linear-gradient(to bottom,transparent 0,transparent 8px,#c9786a 8px,#c9786a 10px,transparent 10px,transparent 19.280px)}

/* scrollbar */
.vscroll{width:23px;display:flex;flex-direction:column;align-items:center;padding:14px 4px 0 2px;background:#e6e6e6}
.sbtn{width:17px;height:17px;background:#fff;border:1px solid #c6c6c6;flex:none;display:flex;align-items:center;justify-content:center}
.vthumb{width:17px;height:18px;background:#fff;border:1px solid #c6c6c6;margin-top:14px;flex:none}
.vtrack{flex:1}
.tri{width:0;height:0;display:block}
.tri.up{border-left:4px solid transparent;border-right:4px solid transparent;border-bottom:5px solid #666}
.tri.down{border-left:4px solid transparent;border-right:4px solid transparent;border-top:5px solid #666}
.tri.left{border-top:4px solid transparent;border-bottom:4px solid transparent;border-right:5px solid #555}
.tri.right{border-top:4px solid transparent;border-bottom:4px solid transparent;border-left:5px solid #555}

/* sheet tabs */
.sheetbar{height:32px;background:#e6e6e6;border-bottom:2px solid #d6d6d6;display:flex;align-items:flex-start;position:relative;font-size:14px}
.nav-l,.nav-r{width:0;height:0;border-top:4px solid transparent;border-bottom:4px solid transparent;margin-top:12px;flex:none}
.nav-l{border-right:4px solid #c2c2c2;margin-left:30px}
.nav-r{border-left:4px solid #c2c2c2;margin-left:29px}
.st{height:28px;line-height:27px;text-align:center;flex:none}
.feb{width:52px;margin-left:47px;background:#fff;color:#217346;font-weight:700;border-bottom:2px solid #217346;font-family:"Noto Sans",sans-serif}
.summ{width:95px;margin:3px 0 0 3px;height:25px;line-height:24px;background:#f8cbad;color:#5a3a2a}
.stsep{width:1px;height:23px;background:#999;margin:4px 0 0 2px;flex:none}
.addsheet{width:19px;height:19px;border:1.500px solid #999;border-radius:50%;margin:6px 0 0 36px;text-align:center;line-height:15px;color:#777;font-size:16px;font-weight:700;flex:none}
.hdots{width:2px;height:2px;background:#aaa;box-shadow:0 5px #aaa,0 10px #aaa;margin:10px 0 0 1038px;flex:none}
.hscroll{margin:8px 0 0 18px;width:143px;height:16px;display:flex;background:#d9d9d9;flex:none}
.sbtn.h{height:16px;width:17px}
.hthumb{width:19px;background:#fff;border:1px solid #c6c6c6;margin-left:1px}
.htrack{flex:1}

/* status */
.status{height:24px;background:#f1f1f1;display:flex;align-items:center;font-size:12.500px;color:#666;position:relative}
.ready{margin-left:8px;width:1216px}
.viewbtn{width:43px;height:24px;display:flex;align-items:center;justify-content:center;flex:none}
.viewbtn.on{background:#c9c9c9}
.zm{width:10px;text-align:center;font-weight:700;font-size:15px;color:#555;margin-left:4px;flex:none}
.slider{width:113px;height:1px;background:#a0a0a0;margin-left:5px;position:relative;flex:none}
.slider .thumb{position:absolute;left:44px;top:-6px;width:5px;height:13px;background:#666}
.slider .tick{position:absolute;left:57px;top:-2px;width:1px;height:5px;background:#aaa}
.status .zm+.slider+.zm{margin-left:3px}
.pctz{margin-left:18px;color:#666}

/* taskbar */
.taskbar{height:46px;background:#1a1a1a;border-top:1px solid #ddd;display:flex;align-items:stretch;position:relative;flex:none}
.start{width:54px;display:flex;align-items:center;justify-content:center;flex:none}
.search{width:390px;background:#f1f1f1;border-bottom:2px solid #dadada;display:flex;align-items:center;padding-left:13px;font-size:16px;color:#333;gap:13px;flex:none}
.tv{width:53px;display:flex;align-items:center;justify-content:center;flex:none}
.ti,.ti2{position:relative;display:flex;align-items:center;justify-content:center;flex:none;padding-bottom:3px}
.ti{width:52px}
.ti2{width:51px}
.tv+.ti{margin-left:4px}
.run::after{content:"";position:absolute;left:4px;right:5px;bottom:0;height:3px;background:#72b3e2}
.excel{background:#4a4a4a}
.alert{background:#a45f2a}
.alert::after{left:0;right:0;background:#f07010}
.badge{position:absolute;left:26px;top:23px;min-width:15px;height:15px;border-radius:50%;color:#fff;font-size:10px;line-height:15px;text-align:center;font-family:"Noto Sans",sans-serif;font-weight:400}
.crim{background:#c81e48;font-weight:700;left:27px;top:24px}
.red{background:#f83030;border-radius:5px;font-size:11px;min-width:17px;left:26px;top:20px;height:18px;line-height:18px}
.red.badge:not(.sq){border-radius:50%;font-size:10px;left:27px}
.pure{background:#f00;left:27px;top:21px;height:16px;min-width:16px;line-height:16px}
.xl{font:700 13px "Noto Sans",sans-serif;fill:#fff}
.tm{font:700 12px "Noto Sans",sans-serif;fill:#fff}
.sk{font:700 15px "Noto Sans",sans-serif;fill:#fff}
.tray{display:flex;align-items:center;flex:1;color:#e6e6e6;font-size:13px;padding-left:4px;padding-bottom:2px}
.tray>svg{width:27px;padding:0 5px;flex:none;overflow:visible}
.eng{width:41px;text-align:center;flex:none}
.clock{width:80px;text-align:center;flex:none;line-height:22px;font-size:12.500px;padding-top:1px}
.notif{position:relative;width:50px;display:flex;justify-content:center}
.nbadge{position:absolute;left:25px;top:8px;width:19px;height:19px;border-radius:50%;border:1.500px solid #ccc;background:#1a1a1a;color:#eee;text-align:center;line-height:16px;font-size:12px;font-weight:700}
```
